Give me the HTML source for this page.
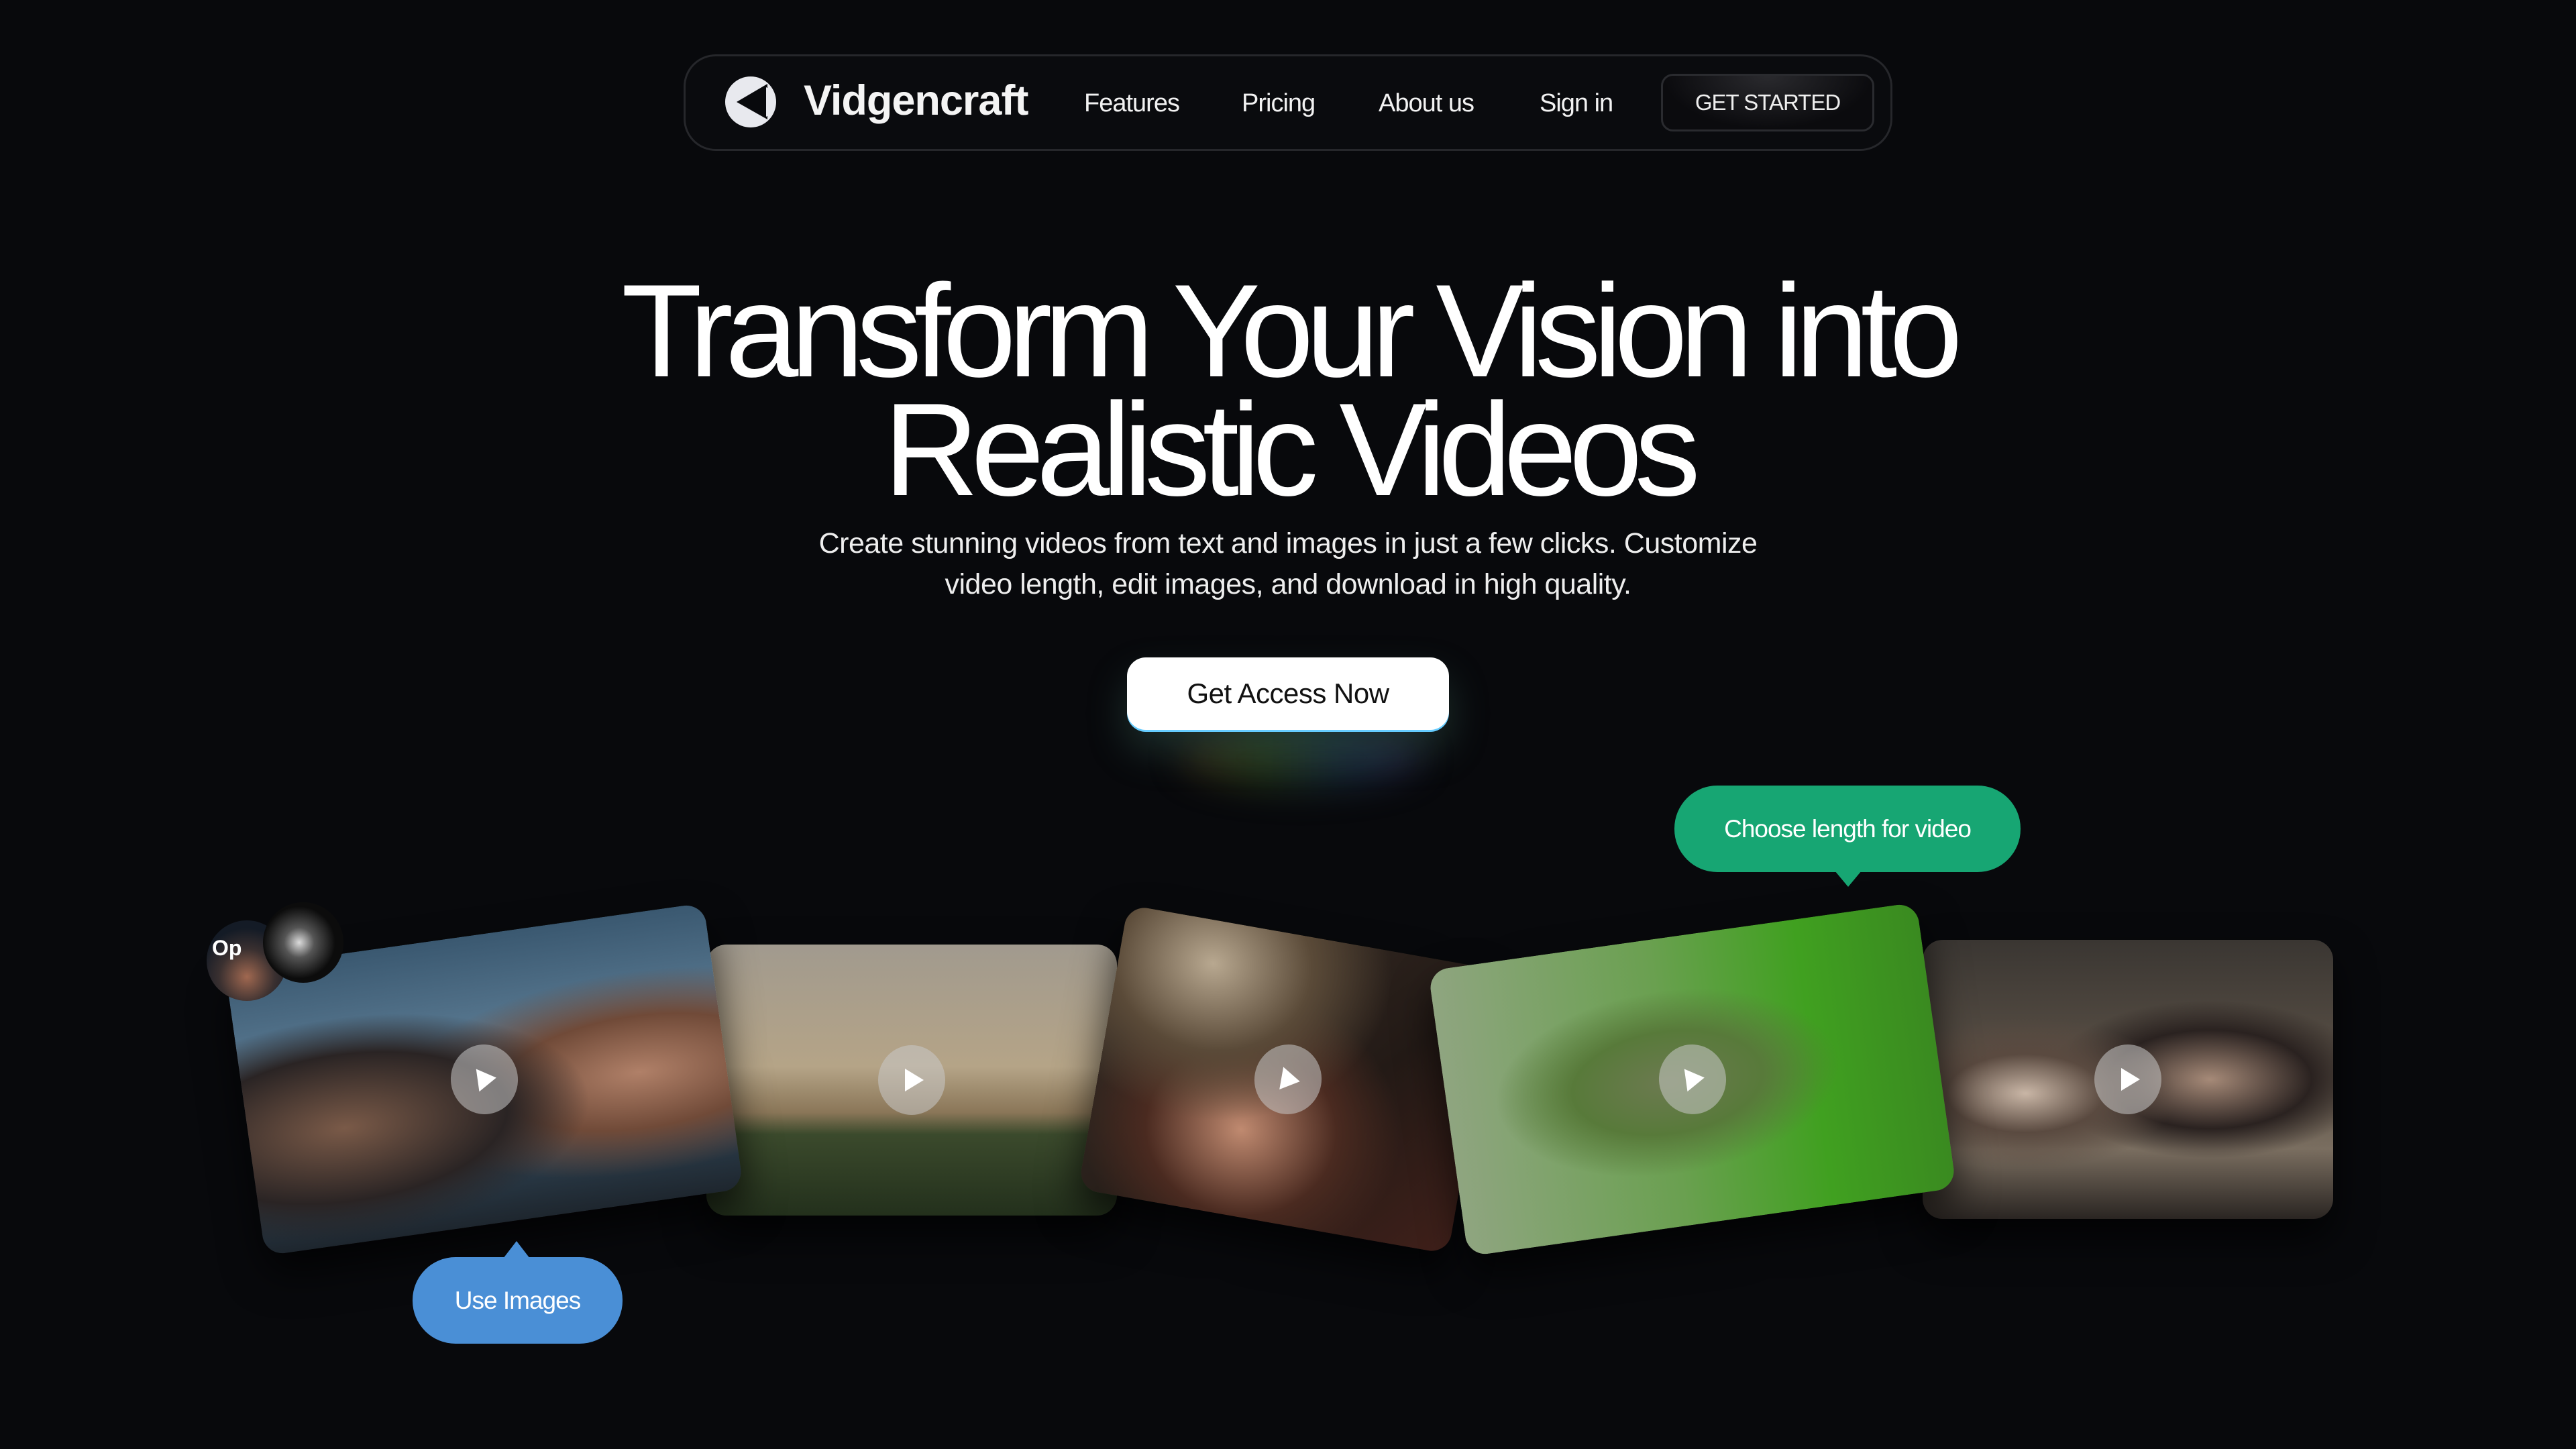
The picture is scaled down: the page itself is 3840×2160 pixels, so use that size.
<!DOCTYPE html>
<html><head><meta charset="utf-8"><style>
*{margin:0;padding:0;box-sizing:border-box}
html,body{width:3840px;height:2160px;background:#08090c;overflow:hidden;font-family:"Liberation Sans",sans-serif;color:#fff}
.abs{position:absolute}
.nav{left:1019px;top:81px;width:1802px;height:144px;border:3px solid #26272b;border-radius:48px;background:#0a0b0e}
.nl{top:133px;font-size:38px;letter-spacing:-1px;color:#f2f2f2}
.gs{left:2476px;top:110px;width:318px;height:86px;border:3px solid #2a2b2f;border-radius:18px;background:radial-gradient(ellipse at 50% 0%,#2a2a2e,#0b0b0e 70%);font-size:33px;letter-spacing:-1px;display:flex;align-items:center;justify-content:center;color:#eee}
h1{position:absolute;left:0;width:3840px;text-align:center;font-size:197px;font-weight:normal;letter-spacing:-12px;line-height:177px;top:405px}
.sub{left:0;width:3840px;text-align:center;top:780px;font-size:43px;line-height:61px;letter-spacing:-0.5px;color:#eee}
.btn{left:1680px;top:980px;width:480px;height:108px;border-radius:28px;background:#fff;color:#111;font-size:42px;display:flex;align-items:center;justify-content:center;letter-spacing:-0.5px;box-shadow:0 3px 0 #6cf, 0 30px 60px rgba(90,160,140,0.25)}
.glow{left:1760px;top:1085px;width:360px;height:90px;background:linear-gradient(90deg,rgba(120,80,30,.35),rgba(70,110,40,.4),rgba(40,80,110,.4),rgba(70,60,130,.35));filter:blur(25px);border-radius:50%}
.card{position:absolute;border-radius:30px;overflow:hidden;box-shadow:0 30px 60px rgba(0,0,0,.7)}
.play{position:absolute;width:100px;height:104px;border-radius:50%;background:rgba(200,200,200,.55);left:50%;top:50%;margin:-52px 0 0 -50px}
.play:after{content:"";position:absolute;left:40px;top:35px;border-left:28px solid #fff;border-top:17px solid transparent;border-bottom:17px solid transparent}
.bub{border-radius:64px;font-size:37px;display:flex;align-items:center;justify-content:center;letter-spacing:-1px}
</style></head><body>
<div class="abs nav"></div>
<svg class="abs" style="left:1078px;top:110px" width="84" height="84" viewBox="0 0 84 84">
<circle cx="41" cy="42" r="38" fill="#e8e9ee"/>
<polygon points="20,42 66,15 66,68" fill="#08090c"/>
<polygon points="64,20 71,24 78,42 71,60 64,64" fill="#e8e9ee"/>
</svg>
<div class="abs" style="left:1198px;top:114px;font-size:63px;font-weight:bold;letter-spacing:-1px;color:#f4f4f4">Vidgencraft</div>
<div class="abs nl" style="left:1616px">Features</div>
<div class="abs nl" style="left:1851px">Pricing</div>
<div class="abs nl" style="left:2055px">About us</div>
<div class="abs nl" style="left:2295px">Sign in</div>
<div class="abs gs">GET STARTED</div>

<h1>Transform Your Vision into<br>Realistic Videos</h1>
<div class="abs sub">Create stunning videos from text and images in just a few clicks. Customize<br>video length, edit images, and download in high quality.</div>
<div class="abs glow"></div>
<div class="abs btn">Get Access Now</div>

<div class="card" style="left:1053px;top:1408px;width:612px;height:404px;background:linear-gradient(180deg,#a19a8e 0%,#b5a487 45%,#8a7658 62%,#3b4a2c 70%,#23301c 100%)"><div class="play"></div></div>
<div class="card" style="left:2866px;top:1401px;width:612px;height:416px;background:radial-gradient(ellipse at 25% 55%,#c9b6a6 0%,#5a4a40 18%,transparent 35%),radial-gradient(ellipse at 70% 50%,#a68a78 0%,#2a2220 25%,transparent 40%),linear-gradient(180deg,#3a3632,#5d5348 50%,#7a6e60 75%,#2a2522)"><div class="play"></div></div>
<div class="card" style="left:1640px;top:1394px;width:560px;height:430px;transform:rotate(10deg);background:radial-gradient(ellipse at 25% 15%,#b8a890 0%,#5a4a38 25%,transparent 45%),radial-gradient(ellipse at 40% 70%,#c08a70 0%,#4a2a20 30%,transparent 50%),linear-gradient(135deg,#3a3028,#231a16 60%,#40201a)"><div class="play"></div></div>
<div class="card" style="left:362px;top:1394px;width:720px;height:430px;transform:rotate(-8deg);background:radial-gradient(ellipse at 20% 60%,#7a5a48 0%,#2a2424 30%,transparent 45%),radial-gradient(ellipse at 82% 55%,#b08068 0%,#704a38 25%,transparent 45%),linear-gradient(180deg,#3a5870 0%,#5e7e96 40%,#2e4252 75%,#1e262e)"><div class="play"></div></div>
<div class="card" style="left:2155px;top:1394px;width:735px;height:430px;transform:rotate(-8deg);background:radial-gradient(ellipse at 45% 50%,#6c7a50 0%,#587a3a 25%,transparent 45%),linear-gradient(90deg,#8fa580 0%,#6aa050 45%,#40a020 75%,#3a8a20 100%)"><div class="play"></div></div>

<div class="abs" style="left:308px;top:1372px;width:120px;height:120px;border-radius:50%;background:radial-gradient(circle at 50% 70%,#a06850 0%,#3a3030 40%,#141b26 70%)"></div>
<div class="abs" style="left:316px;top:1395px;font-size:32px;font-weight:bold">Op</div>
<div class="abs" style="left:392px;top:1345px;width:120px;height:120px;border-radius:50%;background:radial-gradient(circle at 45% 50%,#dcdcdc 0%,#555 25%,#0c0c0c 60%)"></div>

<div class="abs bub" style="left:2496px;top:1171px;width:516px;height:129px;background:#17a673">Choose length for video</div>
<div class="abs" style="left:2735px;top:1298px;border-top:24px solid #17a673;border-left:20px solid transparent;border-right:20px solid transparent"></div>
<div class="abs" style="left:750px;top:1850px;border-bottom:26px solid #4a8fd6;border-left:20px solid transparent;border-right:20px solid transparent"></div>
<div class="abs bub" style="left:615px;top:1874px;width:313px;height:129px;background:#4a8fd6">Use Images</div>
</body></html>
